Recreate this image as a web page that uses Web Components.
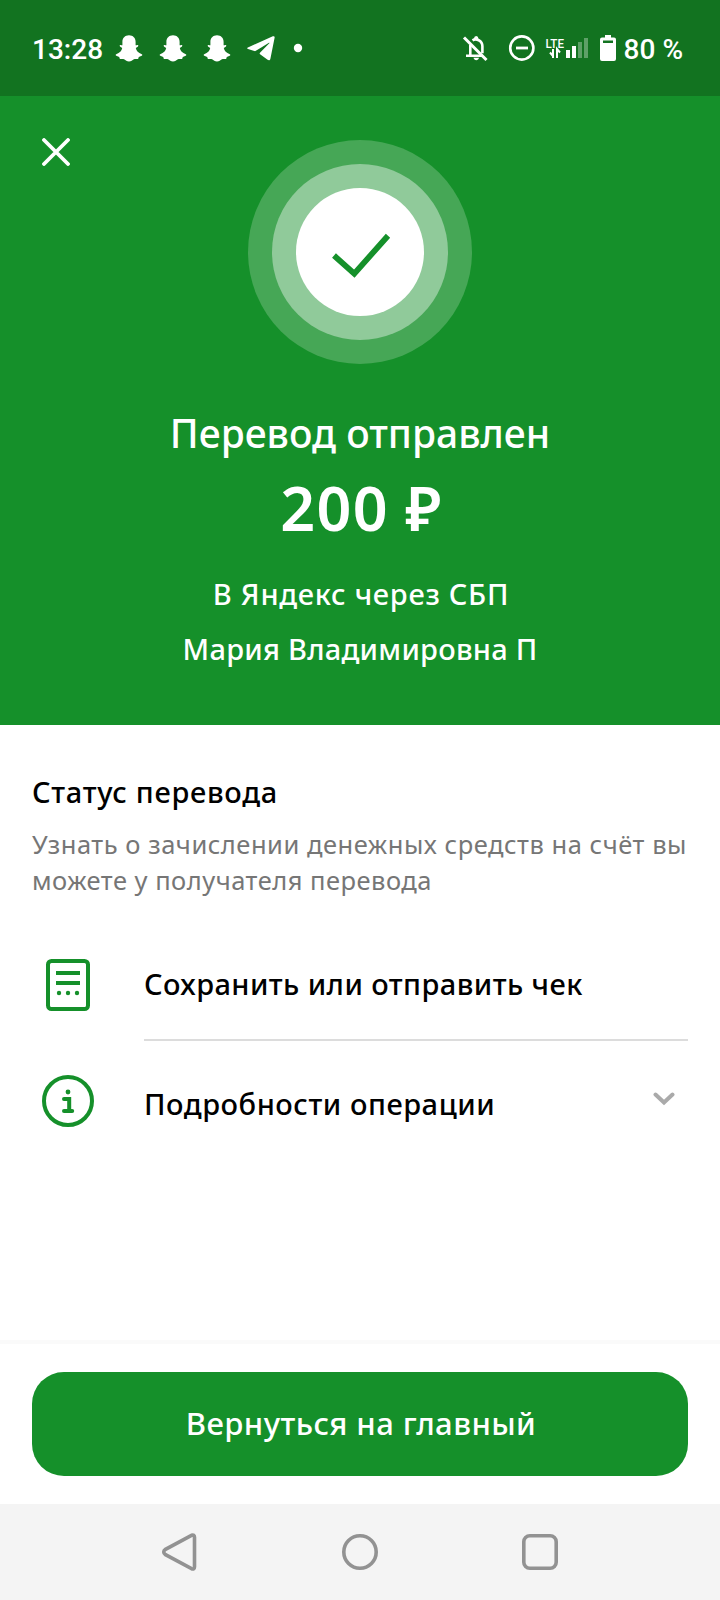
<!DOCTYPE html>
<html lang="ru">
<head>
<meta charset="utf-8">
<title>Перевод отправлен</title>
<style>
html,body{margin:0;padding:0;background:#fff}
body{width:720px;height:1600px;overflow:hidden;font-family:"Noto Sans","Open Sans",sans-serif}
</style>
</head>
<body>
<transfer-screen></transfer-screen>
<script>
function define(name, html, setup) {
  const t = document.createElement('template');
  t.innerHTML = html;
  customElements.define(name, class extends HTMLElement {
    constructor() {
      super();
      this.attachShadow({mode: 'open'}).append(t.content.cloneNode(true));
    }
    connectedCallback() { if (setup) setup(this); }
  });
}

// A line of text with its own size, line box, weight and tracking.
define('ui-text', `<style>:host{display:block;white-space:nowrap}</style><slot></slot>`, el => {
  const a = n => el.getAttribute(n);
  el.style.fontSize = a('size') + 'px';
  el.style.lineHeight = a('line') + 'px';
  el.style.fontWeight = a('weight') || 400;
  el.style.letterSpacing = (a('track') || 0) + 'px';
});

define('snap-icon', `<style>:host{display:block;width:28px;height:27px}svg{display:block}</style>
<svg width="28" height="27" viewBox="0 0 28 27"><path fill="#fff" d="M14 .3c4 0 6.600 2.800 6.600 6.700v3.300c.8.2 1.600-.5 2.300-.2.6.4.5 1.200-.2 1.700l-1.900 1.200c.5 2.900 2.500 4.800 6 6.200.7.4.6 1.200-.1 1.600l-2.900 1.300-.7 1.900c-1.400.1-2.900-.3-4.200.3-1.600.8-2.700 2.200-4.900 2.200s-3.300-1.400-4.900-2.200c-1.300-.6-2.800-.2-4.200-.3l-.7-1.900-2.900-1.300c-.7-.4-.8-1.200-.1-1.600 3.500-1.400 5.500-3.300 6-6.200l-1.900-1.200c-.7-.5-.8-1.300-.2-1.700.7-.3 1.500.4 2.300.2V7C7.400 3.100 10 .3 14 .3z"/></svg>`);

define('status-bar', `<style>
:host{display:flex;box-sizing:border-box;height:96px;background:#127320;color:#fff;padding:0 37px 0 32px;align-items:center;font-family:Roboto,sans-serif}
ui-text{height:34px;padding-top:3px}
snap-icon{margin:1px 16px 0 0}
.time{width:83px}
svg{display:block;flex:none}
.tg{margin-top:2px}
.gap{flex:1}
</style>
<ui-text class="time" size="28" line="34" weight="500">13:28</ui-text>
<snap-icon></snap-icon><snap-icon></snap-icon><snap-icon></snap-icon>
<svg class="tg" width="60" height="28" viewBox="0 0 60 28"><path fill="#fff" d="M.9 12.500 25.800 1.300c1.200-.5 2.100.2 1.800 1.500l-4.200 20.900c-.4 1.700-1.600 1.900-2.800 1.100l-7.200-5.200c-1-.7-1-1.300-.2-2.100l9.100-9.200c.4-.5-.1-.7-.7-.4L8.900 15.800c-.6.400-1 .4-1.600.2l-6.300-2c-1-.4-1-1.100-.1-1.500z"/><circle cx="51" cy="13" r="4.200" fill="#fff"/></svg>
<div class="gap"></div>
<svg width="164" height="36" viewBox="460 30 164 36">
<g fill="none" stroke="#fff" stroke-width="2.600"><path d="M464 37.500 486.500 60" stroke-width="3"/><path d="M472.500 40.300c3.500-2.200 9.900 0 9.900 6v7M470.300 45v10.700M466 55.700h17"/><circle cx="521.800" cy="48" r="11.600"/><path d="M516 48h12" stroke-width="2.800"/></g>
<path fill="#fff" d="M474 38.500q0-2.500 2.200-2.500t2.200 2.500v1.500H474zM473.500 57.800h5.500c-.5 3.200-5 3.200-5.500 0z"/>
<text x="545.500" y="48" font-family="Roboto" font-size="12" font-weight="500" fill="#fff" textLength="18.500" lengthAdjust="spacingAndGlyphs">LTE</text>
<path d="M550 52.500 553 56M553 58V49M557 58V49l3 3.500" stroke="#fff" stroke-width="2" fill="none"/>
<path fill="#fff" d="M566 50h4v8h-4zM572 46h4v12h-4z"/><path fill="#fff" opacity=".32" d="M578 42h4v16h-4zM584 38h4v20h-4z"/>
<path fill="#fff" fill-rule="evenodd" d="M605 35h6v2.500h3q2 0 2 2V59q0 2-2 2h-12q-2 0-2-2V39.500q0-2 2-2h3zM603 40.500v2.600h10v-2.600z"/>
</svg>
<ui-text size="28" line="34" weight="500">80 %</ui-text>`);

define('success-mark', `<style>:host{display:block;width:224px;height:224px}svg{display:block}</style>
<svg width="224" height="224"><circle cx="112" cy="112" r="112" fill="#46a756"/><circle cx="112" cy="112" r="88" fill="#90ca9a"/><circle cx="112" cy="112" r="64" fill="#fff"/><path d="M86 115.500 106.300 133.600 140 95.800" fill="none" stroke="#15902a" stroke-width="5.800"/></svg>`);

define('transfer-hero', `<style>
:host{display:block;box-sizing:border-box;height:628.500px;background:#15902a;color:#fff;padding-top:44px;text-align:center}
.top{display:grid;grid-template-columns:1fr auto 1fr;height:224px}
.close{margin:-2px 0 0 42px}
.title{margin-top:45px}.sum{margin:15px 0 22px;word-spacing:-1px;text-indent:3px}
.to{text-indent:2px}
</style>
<div class="top"><svg class="close" width="28" height="28"><path d="M2 2 26 26M26 2 2 26" stroke="#fff" stroke-width="3.800" stroke-linecap="round"/></svg><success-mark></success-mark></div>
<ui-text class="title" size="39" line="48" weight="500">Перевод отправлен</ui-text>
<ui-text class="sum" size="61" line="72" weight="600" track="1.400">200 ₽</ui-text>
<ui-text class="to" size="29" line="55" weight="500" track=".72">В Яндекс через СБП</ui-text>
<ui-text size="29" line="55" weight="500" track=".24">Мария Владимировна П</ui-text>`);

define('transfer-status', `<style>
:host{display:block;padding:47.500px 32px 0;height:158px}
.note{color:#767676}.h{margin-bottom:14px}
</style>
<ui-text class="h" size="29" line="40" weight="500" track=".7">Статус перевода</ui-text>
<ui-text class="note" size="25.500" line="36" track=".53">Узнать о зачислении денежных средств на счёт вы</ui-text>
<ui-text class="note" size="25.500" line="36" track=".49">можете у получателя перевода</ui-text>`);

define('action-row', `<style>
:host{display:flex;margin:0 32px;height:111px}
.icon{width:72px;padding:29px 0 0 10px;margin-right:30px}
.body{flex:1;display:flex;justify-content:space-between}
:host([divided]) .body{box-shadow:inset 0 -2px #dcdcdc}
</style><div class="icon"><slot name="icon"></slot></div><div class="body"><slot></slot><slot name="end"></slot></div>`);

define('nav-bar', `<style>:host{display:flex;justify-content:center;gap:140px;align-items:center;height:96px;background:#f4f4f4}svg{display:block}</style>
<svg width="40" height="40"><path d="M31.500 3.300 5.500 17.300q-3.600 2.700 0 5.400L31.500 36.700q3 1 3-2V5.300q0-3-3-2z" fill="none" stroke="#929292" stroke-width="3.600"/></svg>
<svg width="40" height="40"><circle cx="20" cy="20" r="16.200" fill="none" stroke="#929292" stroke-width="3.600"/></svg>
<svg width="40" height="40"><rect x="3.800" y="3.800" width="32.400" height="32.400" rx="6" fill="none" stroke="#929292" stroke-width="3.600"/></svg>`);

define('main-button', `<style>
:host{display:block;padding:28px 32px;border-top:4px solid #fafafa}
button{display:flex;width:656px;height:104px;border:0;border-radius:32px;background:#15902a;color:#fff;font-family:inherit;align-items:center;justify-content:center;padding:0 0 2px 2px}
</style><button><slot></slot></button>`);

define('transfer-screen', `<style>
:host{display:flex;flex-direction:column;width:720px;height:1600px;color:#000}
svg{display:block}.grow{flex:1}
.r1{padding-top:34px}.r2{padding-top:38px}.chev{margin:45px 13px 0 0}
</style>
<status-bar></status-bar>
<transfer-hero></transfer-hero>
<transfer-status></transfer-status>
<action-row divided>
<svg slot="icon" width="52" height="52" fill="none" stroke="#15902a" stroke-width="4"><rect x="6" y="2" width="40" height="48" rx="3.500"/><path d="M14 14h24M14 24h24"/><g fill="#15902a" stroke="none"><circle cx="17" cy="34" r="2.200"/><circle cx="26" cy="34" r="2.200"/><circle cx="35" cy="34" r="2.200"/></g></svg>
<ui-text class="r1" size="29" line="40" weight="500" track=".43">Сохранить или отправить чек</ui-text></action-row>
<action-row style="margin-top:5px">
<svg slot="icon" width="52" height="52" fill="none" stroke="#15902a" stroke-width="4"><circle cx="26" cy="26" r="24"/><circle cx="26" cy="17" r="2.400" fill="#15902a" stroke="none"/><path d="M22 24h5.200v12M22 36h8.200" stroke-linecap="round"/></svg>
<ui-text class="r2" size="29" line="40" weight="500" track=".54">Подробности операции</ui-text>
<svg slot="end" class="chev" width="22" height="16"><path d="M2.500 3.500 11 11.500 19.500 3.500" fill="none" stroke="#aaa" stroke-width="4" stroke-linecap="round"/></svg></action-row>
<div class="grow"></div>
<main-button><ui-text size="31" line="40" weight="500" track=".45">Вернуться на главный</ui-text></main-button>
<nav-bar></nav-bar>`);
</script>
</body>
</html>
